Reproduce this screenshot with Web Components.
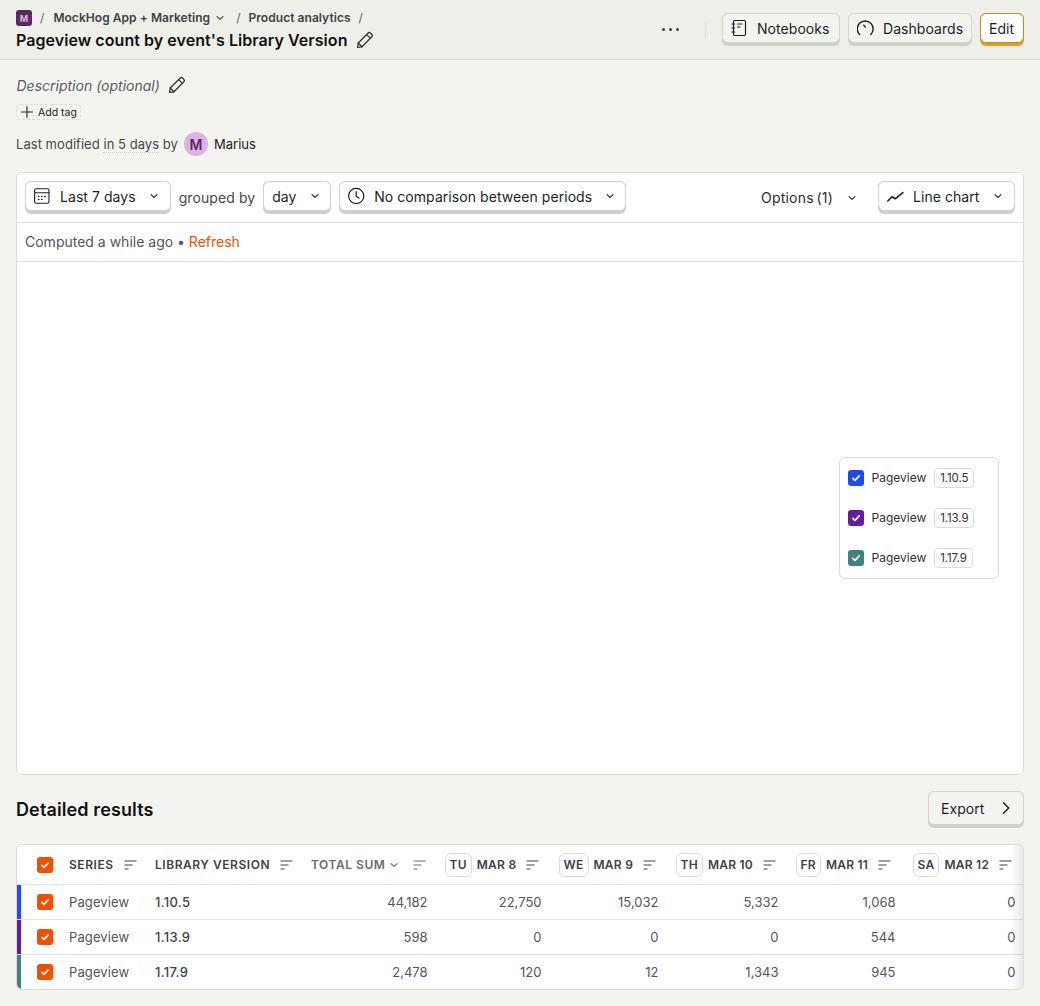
<!DOCTYPE html>
<html lang="en"><head><meta charset="utf-8"><title>Insight</title>
<style>
html,body{margin:0;padding:0;background:#f3f4ef}
body{font-family:Inter,"Liberation Sans",sans-serif;color:#111;width:1040px;height:1006px;overflow:hidden}
</style></head><body>
<app-page></app-page>
<script>
const I={
chev:'<svg width="12" height="12" viewBox="0 0 12 12" fill="none" stroke="currentColor" stroke-width="1.1" stroke-linecap="round" stroke-linejoin="round"><path d="M3 4.600 6 7.400 9 4.600"/></svg>',
pencil:'<svg width="20" height="20" viewBox="0 0 20 20" fill="none" stroke="currentColor" stroke-width="1.25" stroke-linejoin="round" stroke-linecap="round"><path d="M2.600 17.400 3.200 13 13.200 3a1.600 1.600 0 0 1 2.200 0l1.500 1.500a1.600 1.600 0 0 1 0 2.200L7 16.800l-4.400.6Z"/><path d="M11.600 4.600 15.400 8.400M3.200 13 7 16.800"/></svg>',
notebook:'<svg width="18" height="18" viewBox="0 0 18 18" fill="none" stroke="currentColor" stroke-width="1.2" stroke-linecap="round" stroke-linejoin="round"><rect x="2.500" y="1.500" width="12" height="15" rx="1.200"/><path d="M1 5h2.600M1 9h2.600M1 13h2.600M6.500 5h4.500M6.500 8h2.500"/></svg>',
gauge:'<svg width="18" height="18" viewBox="0 0 18 18" fill="none" stroke="currentColor" stroke-width="1.400" stroke-linecap="round"><path d="M2.600 15.500A7.900 7.900 0 1 1 13.800 15.500"/><path d="M6.800 6.300 8.400 8.100"/></svg>',
cal:'<svg width="18" height="18" viewBox="0 0 18 18" fill="none" stroke="currentColor" stroke-width="1.100" stroke-linecap="round"><rect x=".6" y="1.800" width="14.400" height="14.400" rx="1.800"/><path d="M.6 5.800h14.400"/><path d="M4.300 9.300h.7M7.500 9.300h.7M10.700 9.300h.7M4.300 12.300h.7M7.500 12.300h.7" stroke-width="1.200"/></svg>',
clock:'<svg width="18" height="18" viewBox="0 0 18 18" fill="none" stroke="currentColor" stroke-width="1.200" stroke-linecap="round" stroke-linejoin="round"><circle cx="8.200" cy="9" r="7.600"/><path d="M8.200 4.600V9.300l2.800 1.800"/></svg>',
line:'<svg width="18" height="18" viewBox="0 0 18 18" fill="none" stroke="currentColor" stroke-width="1.600" stroke-linecap="round" stroke-linejoin="round"><path d="M.8 14 5 9.800 8.200 11.800 15.800 5.600"/></svg>',
plus:'<svg width="14" height="14" viewBox="0 0 14 14" fill="none" stroke="currentColor" stroke-width="1.100" stroke-linecap="round"><path d="M7 1.500v11M1.500 7h11"/></svg>',
sort:'<svg width="13" height="10" viewBox="0 0 13 10" fill="none" stroke="currentColor" stroke-width="1.100"><path d="M.5 1h12M.5 5h8M.5 9h4"/></svg>',
next:'<svg width="12" height="14" viewBox="0 0 12 14" fill="none" stroke="currentColor" stroke-width="1.500" stroke-linecap="round" stroke-linejoin="round"><path d="M3.500 1.800 8.700 7 3.500 12.200"/></svg>'
};
function def(name,css,html){
  customElements.define(name,class extends HTMLElement{
    connectedCallback(){
      if(this.shadowRoot)return;
      const r=this.attachShadow({mode:'open'});
      const h=typeof html==='function'?html(this):html;
      r.innerHTML='<style>'+css+'</style>'+h;
    }
  });
}
def('x-ico',':host{display:inline-flex;flex:none;align-items:center;justify-content:center;line-height:0}',el=>I[el.getAttribute('n')]);
def('x-btn',`
:host{display:inline-flex;flex:none;box-sizing:border-box;height:33px;border-radius:6px;background:#cfd0c8;padding-bottom:3px;font-size:14px;color:#1d1f27;letter-spacing:.06px}
.face{display:flex;align-items:center;box-sizing:border-box;height:100%;width:100%;border:1px solid #d3d4cc;border-radius:6px;background:#fff;padding:0 8px;gap:8px;white-space:nowrap}
:host([flat]) .face{background:#f3f4ef}
:host([edit]){background:#e49b25}
:host([edit]) .face{border-color:#bd8a35}
`,`<div class="face"><slot name="i"></slot><slot></slot><slot name="e"></slot></div>`);
def('x-check',`
:host{display:inline-flex;width:16px;height:16px;border-radius:3px;background:var(--c,#f54e00);align-items:center;justify-content:center;flex:none}
`,'<svg width="10" height="10" viewBox="0 0 10 10" fill="none" stroke="#fff" stroke-width="1.700" stroke-linecap="round" stroke-linejoin="round"><path d="M1.800 5.300 4 7.300 8.200 2.900"/></svg>');
def('x-header',`
:host{display:flex;box-sizing:border-box;height:60px;background:#eeefe9;border-bottom:1px solid #dcdcd5;padding:0 16px;justify-content:space-between}
.l{display:flex;flex-direction:column}
.crumbs{display:flex;align-items:center;height:16px;margin-top:10px;font-size:12px;font-weight:600;color:#414246;white-space:nowrap;letter-spacing:.05px}
.crumbs span{margin-top:-1px}
.crumbs .logo{margin-top:0}
.logo{width:16px;height:16px;border-radius:3px;background:#5a2a5f;color:#e0b4e4;font-size:9px;font-weight:700;display:flex;align-items:center;justify-content:center;margin-right:8px}
.sl{color:#5c5d62;font-weight:400;margin-right:9px}
.title{display:flex;align-items:center;margin-top:2px;height:24px;font-size:16px;font-weight:600;color:#111;letter-spacing:.06px;white-space:nowrap}
.title x-ico{margin-left:7px;color:#333}
.r{display:flex;align-items:center;margin-top:13px;height:33px}
.dots{display:flex;gap:4px;margin-right:26px;margin-top:-1px}
.dots i{width:3px;height:3px;border-radius:50%;background:#444}
.sep{width:1px;height:16px;background:#dcdcd5;margin-right:16px}
x-btn+x-btn{margin-left:8px}
`,`<div class="l">
<div class="crumbs"><span class="logo">M</span><span class="sl">/</span><span>MockHog App + Marketing</span><x-ico n="chev" style="margin:0 10px 0 4px"></x-ico><span class="sl" style="margin-right:8px">/</span><span>Product analytics</span><span class="sl" style="margin-left:8px">/</span></div>
<div class="title">Pageview count by event's Library Version<x-ico n="pencil"></x-ico></div>
</div>
<div class="r"><div class="dots"><i></i><i></i><i></i></div><div class="sep"></div>
<x-btn flat style="width:118px"><x-ico slot="i" n="notebook"></x-ico><span>Notebooks</span></x-btn>
<x-btn flat style="width:124px"><x-ico slot="i" n="gauge"></x-ico><span>Dashboards</span></x-btn>
<x-btn edit style="width:44px">Edit</x-btn></div>`);
def('x-meta',`
:host{display:block;padding:0 16px;color:#333}
.d{display:flex;align-items:center;height:20px;margin-top:15px;padding-left:.5px;font-size:14px;font-style:italic;color:#5b5c61}
.d x-ico{margin-left:7.500px;color:#333;font-style:normal}
.t{display:inline-flex;align-items:center;box-sizing:border-box;height:16px;margin-top:9px;padding:0 3px;gap:4px;border:1px dashed #dcdcd5;border-radius:4px;font-size:10.500px;font-weight:400;color:#222}
.m{display:flex;align-items:center;height:24px;margin-top:9px;font-size:13px;color:#46474c;letter-spacing:.04px;white-space:pre}
.u{border-bottom:1px dotted #c9cac3;line-height:15px;margin-top:2px}
.a{width:24px;height:24px;border-radius:50%;background:#dcb1e3;color:#5a2a5f;font-size:14px;font-weight:600;display:flex;align-items:center;justify-content:center;margin:0 6px}
.n{color:#222}
`,`<div class="d">Description (optional)<x-ico n="pencil"></x-ico></div>
<div><span class="t"><x-ico n="plus"></x-ico>Add tag</span></div>
<div class="m">Last modified <span class="u">in 5 days</span> by<span class="a">M</span><span class="n">Marius</span></div>`);
def('x-leg',`
:host{display:flex;align-items:center;height:40px;gap:8px;font-size:12px;color:#2f3036;padding-left:8px}
.p{margin:-2px 0 0 -.5px}
.b{box-sizing:border-box;height:20px;display:inline-flex;align-items:center;padding:0 5px;border:1px solid #dcdcd5;border-radius:4px;font-size:11.500px;color:#333;letter-spacing:-.01em}
`,el=>`<x-check style="--c:${el.getAttribute('c')}"></x-check><span class="p">Pageview</span><span class="b"><slot></slot></span>`);
def('x-insight',`
:host{display:flex;flex-direction:column;box-sizing:border-box;height:603px;margin:16px 16px 0;background:#fff;border:1px solid #dcdcd5;border-radius:6px;position:relative}
.bar{display:flex;align-items:center;box-sizing:border-box;height:50px;border-bottom:1px solid #e4e4dd;padding:0 8px;font-size:14px;color:#46474c}
.gb{margin:0 8px;letter-spacing:.08px}
.sp{flex:1}
.opt{display:flex;align-items:center;color:#2b2c31;margin-right:18px;letter-spacing:.2px}
.comp{display:flex;align-items:center;box-sizing:border-box;height:39px;border-bottom:1px solid #e4e4dd;padding:0 8px 2px;font-size:14px;color:#55565b;white-space:pre}
.comp a{color:#f54e00}
.chart{flex:1}
.legend{position:absolute;left:822px;top:284px;box-sizing:border-box;width:160px;height:122px;border:1px solid #dcdcd5;border-radius:6px;background:#fff}
.ch{width:16px;margin-left:2px}
`,`<div class="bar">
<x-btn><x-ico slot="i" n="cal"></x-ico><span>Last 7 days</span><x-ico class="ch" slot="e" n="chev"></x-ico></x-btn>
<span class="gb">grouped by</span>
<x-btn style="width:68px"><span>day</span><x-ico class="ch" slot="e" n="chev"></x-ico></x-btn>
<x-btn style="margin-left:8px;width:287px"><x-ico slot="i" n="clock"></x-ico><span>No comparison between periods</span><x-ico class="ch" slot="e" n="chev"></x-ico></x-btn>
<span class="sp"></span>
<span class="opt">Options&thinsp;(1)<x-ico class="ch" n="chev" style="margin-left:11px"></x-ico></span>
<x-btn style="width:137px"><x-ico slot="i" n="line"></x-ico><span>Line chart</span><x-ico class="ch" slot="e" n="chev"></x-ico></x-btn>
</div>
<div class="comp">Computed a while ago • <a>Refresh</a></div>
<div class="chart"></div>
<div class="legend"><x-leg c="#1d4aff">1.10.5</x-leg><x-leg c="#621da6">1.13.9</x-leg><x-leg c="#42827e">1.17.9</x-leg></div>`);
def('x-results-head',`
:host{display:flex;align-items:center;justify-content:space-between;height:37px;margin:16px 16px 0}
h2{margin:0;font-size:18px;font-weight:600;color:#111;letter-spacing:.12px}
`,`<h2>Detailed results</h2><x-btn style="height:37px;width:96px" flat><span style="margin-left:4px;flex:1">Export</span><x-ico slot="e" n="next" style="margin-right:3px"></x-ico></x-btn>`);
def('x-row',`
:host{display:grid;grid-template-columns:44px 86px 156px 133px 114px 117px 120px 117px 120px;box-sizing:border-box;height:35px;border-bottom:1px solid #e4e4dd;position:relative;font-size:13px;color:#55565b;align-items:center;letter-spacing:.1px}
:host([head]){height:40px;font-size:12px;font-weight:600;letter-spacing:.045em;color:#414246}
:host(:last-child){border-bottom:none;height:34px}
.bar{position:absolute;left:0;top:0;bottom:0;width:4px;background:var(--bar,transparent)}
`,`<div class="bar"></div><slot></slot>`);
def('x-cell',`
:host{display:flex;align-items:center;box-sizing:border-box;padding:0 8px;white-space:nowrap;min-width:0}
:host([n]){justify-content:flex-end;padding-right:8.500px;letter-spacing:0}
:host([h]){justify-content:flex-start;gap:6px}
:host([ck]){padding:0 0 0 20px}
:host([dim]){color:#6b6c71}
:host([strong]){color:#414246;font-weight:500;letter-spacing:.3px}
:host([dow]){gap:5px;padding-left:8.500px}
.dow{display:inline-flex;align-items:center;justify-content:center;box-sizing:border-box;height:24px;padding:0 4px;border:1px solid #dcdcd5;border-radius:6px}
`,el=>{const w=el.getAttribute('dow');return (w?`<span class="dow">${w}</span>`:'')+'<slot></slot>'});
def('x-table',`
:host{display:block;position:relative;margin:16px 16px 0;background:#fff;border:1px solid #dcdcd5;border-radius:6px;overflow:hidden}
.fade{position:absolute;right:0;top:0;bottom:0;width:12px;background:linear-gradient(to right,rgba(0,0,0,0),rgba(0,0,0,.09))}
`,`<slot></slot><div class="fade"></div>`);
const sort='<x-ico n="sort" style="margin-left:4px"></x-ico>';
const day=(d,t)=>`<x-cell h dow="${d}" style="letter-spacing:.25px">${t}<x-ico n="sort" style="margin-left:5px"></x-ico></x-cell>`;
const row=(bar,ver,vals)=>`<x-row style="--bar:${bar}"><x-cell ck><x-check></x-check></x-cell><x-cell>Pageview</x-cell><x-cell strong>${ver}</x-cell>${vals.map(v=>`<x-cell n>${v}</x-cell>`).join('')}</x-row>`;
def('app-page',':host{display:block}',`<x-header></x-header><x-meta></x-meta><x-insight></x-insight><x-results-head></x-results-head>
<x-table>
<x-row head><x-cell ck><x-check></x-check></x-cell><x-cell h>SERIES${sort}</x-cell><x-cell h>LIBRARY VERSION${sort}</x-cell>
<x-cell h dim>TOTAL SUM<x-ico n="chev" style="margin-left:-3px"></x-ico><x-ico n="sort" style="margin-left:6.500px"></x-ico></x-cell>
${day('TU','MAR 8')}${day('WE','MAR 9')}${day('TH','MAR 10')}${day('FR','MAR 11')}${day('SA','MAR 12')}</x-row>
${row('#1d4aff','1.10.5',['44,182','22,750','15,032','5,332','1,068','0'])}
${row('#621da6','1.13.9',['598','0','0','0','544','0'])}
${row('#42827e','1.17.9',['2,478','120','12','1,343','945','0'])}
</x-table>`);
</script>
</body></html>
